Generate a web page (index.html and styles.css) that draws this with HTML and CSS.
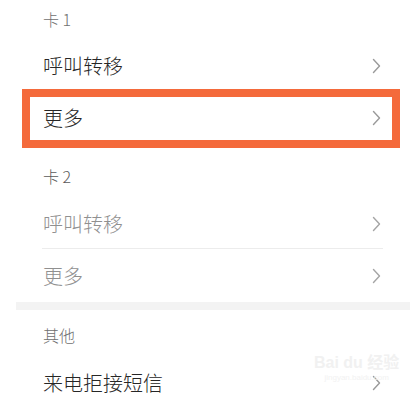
FILE: index.html
```html
<!DOCTYPE html>
<html lang="zh-CN">
<head>
<meta charset="utf-8">
<title>呼叫设置</title>
<link rel="stylesheet" href="styles.css">
</head>
<body>
<div class="page">
  <div class="group-title first">卡 1</div>
  <div class="row">
    <span class="label">呼叫转移</span>
    <svg class="chev" viewBox="0 0 9 16" width="9" height="16"><polyline points="1.5,1.5 7.5,8 1.5,14.5"/></svg>
  </div>
  <div class="row highlighted">
    <span class="label">更多</span>
    <svg class="chev" viewBox="0 0 9 16" width="9" height="16"><polyline points="1.5,1.5 7.5,8 1.5,14.5"/></svg>
    <div class="mark-box"></div>
  </div>

  <div class="group-title second">卡 2</div>
  <div class="row disabled divided">
    <span class="label">呼叫转移</span>
    <svg class="chev" viewBox="0 0 9 16" width="9" height="16"><polyline points="1.5,1.5 7.5,8 1.5,14.5"/></svg>
  </div>
  <div class="row disabled tall">
    <span class="label">更多</span>
    <svg class="chev" viewBox="0 0 9 16" width="9" height="16"><polyline points="1.5,1.5 7.5,8 1.5,14.5"/></svg>
  </div>

  <div class="band"></div>

  <div class="group-title third">其他</div>
  <div class="row watermarked">
    <span class="label">来电拒接短信</span>
    <svg class="chev" viewBox="0 0 9 16" width="9" height="16"><polyline points="1.5,1.5 7.5,8 1.5,14.5"/></svg>
    <div class="watermark"><span class="wm-main">Bai du 经验</span><span class="wm-sub">jingyan.baidu.com</span></div>
  </div>
</div>
</body>
</html>
```

FILE: styles.css
```css
html, body {
  margin: 0;
  padding: 0;
  background: #ffffff;
}

body {
  font-family: "Noto Sans CJK SC", "Noto Sans", sans-serif;
  overflow: hidden;
}

.page {
  width: 414px;
  height: 400px;
  overflow: hidden;
}

.group-title {
  padding-left: 43px;
  font-size: 16px;
  line-height: 22px;
  font-weight: 300;
  color: #707070;
}

.group-title.first {
  padding-top: 8px;
  height: 32px;
}

.group-title.second {
  padding-top: 21px;
  height: 33px;
  color: #5a5a5a;
}

.group-title.third {
  padding-top: 14px;
  height: 33px;
}

.row {
  position: relative;
  display: flex;
  align-items: center;
  justify-content: space-between;
  height: 52px;
  padding: 0 33px 0 43px;
  box-sizing: border-box;
}

.row.divided {
  height: 51px;
  padding-top: 1px;
}

.row.divided::after {
  content: "";
  position: absolute;
  left: 42px;
  right: 31px;
  bottom: 0;
  height: 1px;
  background: #ececec;
}

.row.tall {
  height: 53px;
}

.label {
  font-size: 20px;
  line-height: 26px;
  font-weight: 300;
  color: #262626;
}

.row.disabled .label {
  color: #909090;
}

.chev {
  display: block;
  fill: none;
  stroke: #9a9a9a;
  stroke-width: 1.4;
  stroke-linecap: round;
  stroke-linejoin: round;
}

.row.disabled .chev {
  stroke: #a5a5a5;
}

.mark-box {
  position: absolute;
  top: -3px;
  left: 22px;
  right: 14px;
  bottom: -4px;
  border: 8px solid #f46a3b;
}

.band {
  height: 8px;
  margin: 0 4px 0 16px;
  background: #f3f3f3;
}

.watermark {
  position: absolute;
  left: 314px;
  top: -4px;
  display: flex;
  flex-direction: column;
  align-items: center;
  pointer-events: none;
}

.wm-main {
  font-family: "Liberation Sans", "Noto Sans CJK SC", sans-serif;
  font-size: 16px;
  font-weight: bold;
  line-height: 20px;
  color: #f1f1f1;
}

.wm-sub {
  font-family: "Liberation Sans", sans-serif;
  font-size: 8px;
  line-height: 10px;
  color: #f2f2f2;
}
```
